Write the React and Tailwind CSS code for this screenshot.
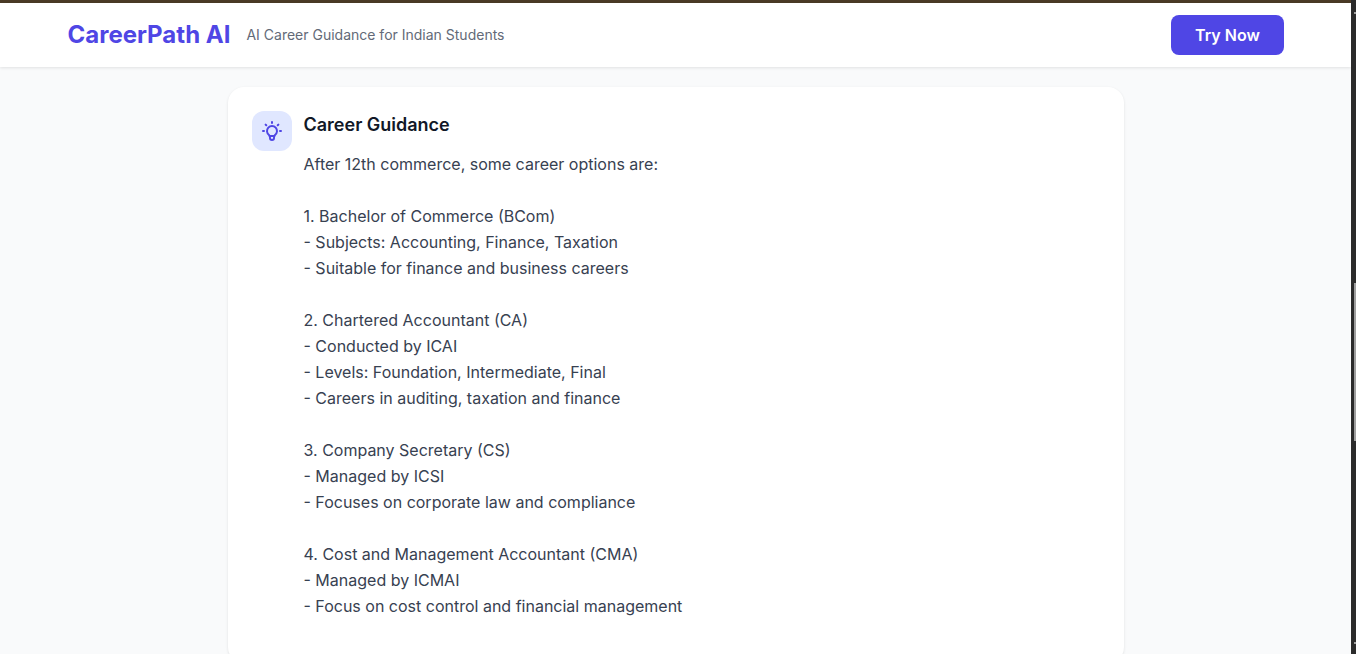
const lines = [
  "After 12th commerce, some career options are:",
  "",
  "1. Bachelor of Commerce (BCom)",
  "- Subjects: Accounting, Finance, Taxation",
  "- Suitable for finance and business careers",
  "",
  "2. Chartered Accountant (CA)",
  "- Conducted by ICAI",
  "- Levels: Foundation, Intermediate, Final",
  "- Careers in auditing, taxation and finance",
  "",
  "3. Company Secretary (CS)",
  "- Managed by ICSI",
  "- Focuses on corporate law and compliance",
  "",
  "4. Cost and Management Accountant (CMA)",
  "- Managed by ICMAI",
  "- Focus on cost control and financial management",
].join("\n");

function Bulb() {
  return (
    <svg width="24" height="24" viewBox="0 0 24 24" fill="none" stroke="#4f46e5" strokeWidth="2" strokeLinecap="round" strokeLinejoin="round">
      <path d="M3 12h1m8-9v1m8 8h1M5.6 5.6l.7.7m12.1-.7l-.7.7" />
      <path d="M9 16a5 5 0 1 1 6 0a3.5 3.5 0 0 0-1 3a2 2 0 0 1-4 0a3.5 3.5 0 0 0-1-3" />
      <path d="M9.7 17h4.6" />
    </svg>
  );
}

export default function App() {
  return (
    <div className="h-[654px] overflow-hidden flex bg-[#2b2b2b] font-['Inter',sans-serif]">
      <div className="w-[1351px] shrink-0 flex flex-col bg-[#f9fafb]">
        <div className="h-[3px] shrink-0 bg-[#4a3a26]" />
        <header className="h-16 shrink-0 bg-white shadow-[0_1px_3px_rgba(0,0,0,0.1)] relative flex items-center justify-between pl-[67.5px] pr-[67px]">
          <div className="flex items-center gap-4">
            <span className="text-2xl font-bold text-[#4f46e5] leading-8">CareerPath AI</span>
            <span className="text-sm text-[#636a78] leading-5">AI Career Guidance for Indian Students</span>
          </div>
          <button className="w-[113px] h-10 rounded-lg bg-[#4f46e5] text-white font-semibold text-base">Try Now</button>
        </header>
        <main className="flex-1 flex justify-center pt-5">
          <div className="w-[896px] h-[576px] shrink-0 bg-white rounded-2xl shadow-[0_1px_3px_rgba(0,0,0,0.1)] p-6 flex gap-3 items-start">
            <div className="w-10 h-10 shrink-0 rounded-xl bg-[#e0e7ff] flex items-center justify-center">
              <Bulb />
            </div>
            <div>
              <h2 className="text-lg font-semibold text-[#111827] leading-7">Career Guidance</h2>
              <p className="mt-3 text-base leading-[26px] text-[#374151] whitespace-pre-line">{lines}</p>
            </div>
          </div>
        </main>
      </div>
      <div className="flex-1 relative bg-[#2b2b2b]">
        <div className="absolute top-[12px] left-[3px] w-[2px] h-[2px] bg-[#9f9f9f]" />
        <div className="absolute top-[283px] left-[3px] w-[2px] h-[158px] bg-[#9f9f9f]" />
        <div className="absolute top-[642px] left-[3px] w-[2px] h-[2px] bg-[#9f9f9f]" />
      </div>
    </div>
  );
}
